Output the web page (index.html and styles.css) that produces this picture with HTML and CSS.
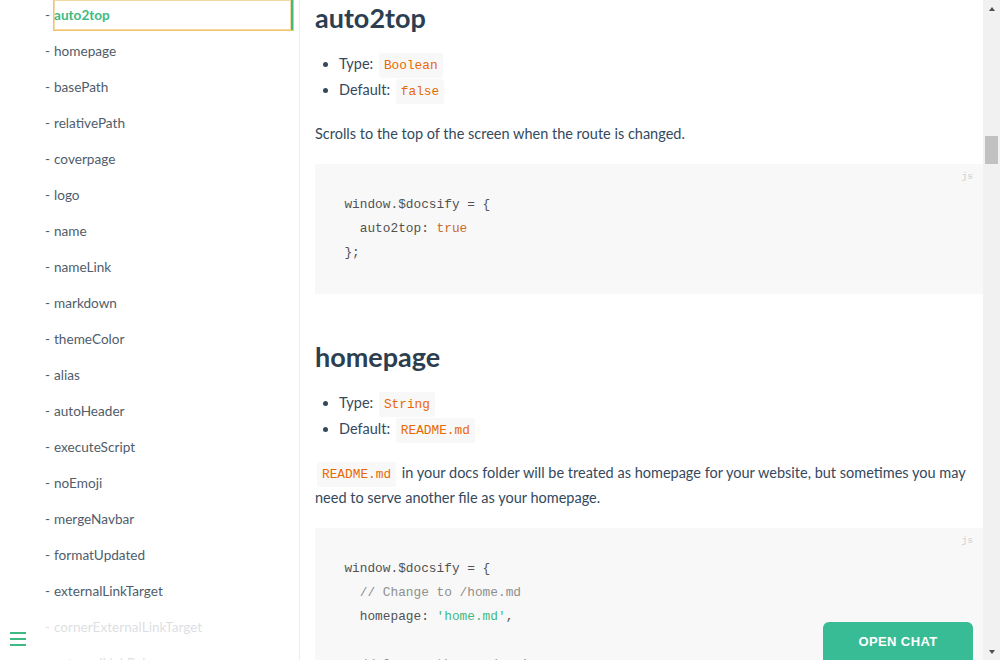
FILE: index.html
```html
<!DOCTYPE html>
<html lang="en">
<head>
<meta charset="utf-8">
<title>Configuration - docsify</title>
<link rel="stylesheet" href="styles.css">
</head>
<body>
<div class="app">
  <aside class="sidebar">
    <ul class="sub-sidebar">
      <li class="active"><a>auto2top</a></li>
      <li><a>homepage</a></li>
      <li><a>basePath</a></li>
      <li><a>relativePath</a></li>
      <li><a>coverpage</a></li>
      <li><a>logo</a></li>
      <li><a>name</a></li>
      <li><a>nameLink</a></li>
      <li><a>markdown</a></li>
      <li><a>themeColor</a></li>
      <li><a>alias</a></li>
      <li><a>autoHeader</a></li>
      <li><a>executeScript</a></li>
      <li><a>noEmoji</a></li>
      <li><a>mergeNavbar</a></li>
      <li><a>formatUpdated</a></li>
      <li><a>externalLinkTarget</a></li>
      <li><a>cornerExternalLinkTarget</a></li>
      <li><a>externalLinkRel</a></li>
    </ul>
    <button class="sidebar-toggle" aria-label="toggle sidebar"><span></span><span></span><span></span></button>
  </aside>

  <main class="content">
    <section class="markdown-section">
      <h2 class="first">auto2top</h2>
      <ul class="props">
        <li>Type: <code>Boolean</code></li>
        <li>Default: <code>false</code></li>
      </ul>
      <p>Scrolls to the top of the screen when the route is changed.</p>
      <pre data-lang="js"><code>window.$docsify = {
  auto2top: <span class="tk-bool">true</span>
};</code></pre>

      <h2>homepage</h2>
      <ul class="props">
        <li>Type: <code>String</code></li>
        <li>Default: <code>README.md</code></li>
      </ul>
      <p><code>README.md</code> in your docs folder will be treated as homepage for your website, but sometimes you may need to serve another file as your homepage.</p>
      <pre data-lang="js"><code>window.$docsify = {
  <span class="tk-comment">// Change to /home.md</span>
  homepage: <span class="tk-string">'home.md'</span>,

  <span class="tk-comment">// Or use the readme in your repo</span>
  homepage:
    <span class="tk-string">'https://raw.githubusercontent.com/docsifyjs/docsify/master/README.md'</span>,
};</code></pre>
    </section>
  </main>

  <div class="scrollbar">
    <div class="sb-btn"><span class="arrow-up"></span></div>
    <div class="sb-track"><div class="sb-thumb"></div></div>
    <div class="sb-btn"><span class="arrow-down"></span></div>
  </div>
</div>

<button class="open-chat">OPEN CHAT</button>
</body>
</html>
```

FILE: styles.css
```css
* { box-sizing: border-box; }

html, body {
  margin: 0;
  padding: 0;
  height: 660px;
  overflow: hidden;
  background: #fff;
}

body {
  font-family: "Lato", "Liberation Sans", sans-serif;
  font-size: 14.5px;
  color: #34495e;
  -webkit-font-smoothing: antialiased;
}

.app {
  display: flex;
  height: 660px;
}

/* ---------- Sidebar ---------- */
.sidebar {
  position: relative;
  flex: 0 0 300px;
  height: 660px;
  overflow: hidden;
  border-right: 1px solid rgba(0, 0, 0, 0.07);
}

.sub-sidebar {
  list-style: none;
  margin: 0;
  padding: 0 6px 0 45px;
}

.sub-sidebar li {
  display: flex;
  align-items: center;
  height: 30px;
  margin-bottom: 6px;
  font-size: 13.6px;
  color: #505d6b;
}

.sub-sidebar li::before {
  content: "-";
  flex: 0 0 9px;
  width: 9px;
  overflow: visible;
}

.sub-sidebar a {
  flex: 1;
  display: block;
  height: 30px;
  line-height: 30px;
  color: #505d6b;
  white-space: nowrap;
}

.sub-sidebar li.active a {
  color: #42b983;
  font-weight: 700;
  border-right: 2px solid #42b983;
  outline: 1px solid #f1c56d;
  outline-offset: 0;
  box-shadow: inset 0 0 0 1px #f6d9a0;
}

.sidebar-toggle {
  position: absolute;
  left: 0;
  bottom: 0;
  width: 284px;
  height: 38px;
  padding: 10px;
  border: 0;
  margin: 0;
  background: rgba(255, 255, 255, 0.8);
  display: flex;
  flex-direction: column;
  align-items: flex-start;
  cursor: pointer;
}

.sidebar-toggle span {
  display: block;
  width: 16px;
  height: 2px;
  margin-bottom: 4px;
  background: #42b983;
}

/* ---------- Main content ---------- */
.content {
  flex: 1;
  height: 660px;
  overflow: hidden;
}

.markdown-section {
  padding: 0 0 0 15px;
}

.markdown-section h2 {
  margin: 45px 0 0;
  font-size: 27px;
  line-height: 35px;
  font-weight: 700;
  color: #2c3e50;
}

.markdown-section h2.first {
  margin-top: 0;
}

.props {
  margin: 16px 0 0;
  padding-left: 24px;
}

.props li {
  line-height: 26px;
}

.markdown-section p {
  margin: 18px 0 0;
  line-height: 25.6px;
}

.markdown-section code {
  font-family: "Liberation Mono", "DejaVu Sans Mono", monospace;
  font-size: 12.8px;
  line-height: 1;
  background: #f8f8f8;
  color: #e96900;
  border-radius: 2px;
  margin: 0 2px;
  padding: 5px 5px;
}

.markdown-section pre {
  position: relative;
  margin: 17px 0 0;
  padding: 0 22.4px;
  background: #f8f8f8;
  line-height: 24px;
  overflow: hidden;
}

.markdown-section pre::after {
  content: attr(data-lang);
  position: absolute;
  top: 0;
  right: 0;
  padding: 5px 10px 0;
  font-family: "Liberation Mono", monospace;
  font-size: 9.6px;
  line-height: 15px;
  color: #ccc;
}

.markdown-section pre code {
  display: block;
  margin: 0;
  padding: 29px 7px;
  background: transparent;
  color: #525252;
  font-size: 12.8px;
  line-height: 24px;
  white-space: pre;
  border-radius: 0;
}

.tk-bool { color: #c76b29; }
.tk-string { color: #42b983; }
.tk-comment { color: #8e908c; }

/* ---------- Scrollbar ---------- */
.scrollbar {
  flex: 0 0 17px;
  height: 660px;
  background: #f1f1f1;
  display: flex;
  flex-direction: column;
}

.sb-btn {
  flex: 0 0 17px;
  display: flex;
  align-items: center;
  justify-content: center;
}

.arrow-up {
  width: 0;
  height: 0;
  border-left: 3.5px solid transparent;
  border-right: 3.5px solid transparent;
  border-bottom: 4px solid #505050;
}

.arrow-down {
  width: 0;
  height: 0;
  border-left: 3.5px solid transparent;
  border-right: 3.5px solid transparent;
  border-top: 4px solid #505050;
}

.sb-track {
  flex: 1;
  padding-top: 119px;
}

.sb-thumb {
  margin: 0 2px;
  height: 28px;
  background: #c1c1c1;
}

/* ---------- Chat button ---------- */
.open-chat {
  position: fixed;
  right: 27px;
  bottom: -10px;
  width: 150px;
  height: 48px;
  padding: 0 0 10px;
  border: 0;
  border-radius: 6px;
  background: #38bc96;
  color: #fff;
  font-family: "Liberation Sans", Arial, sans-serif;
  font-weight: 700;
  font-size: 13px;
  letter-spacing: 0.4px;
  cursor: pointer;
}
```
